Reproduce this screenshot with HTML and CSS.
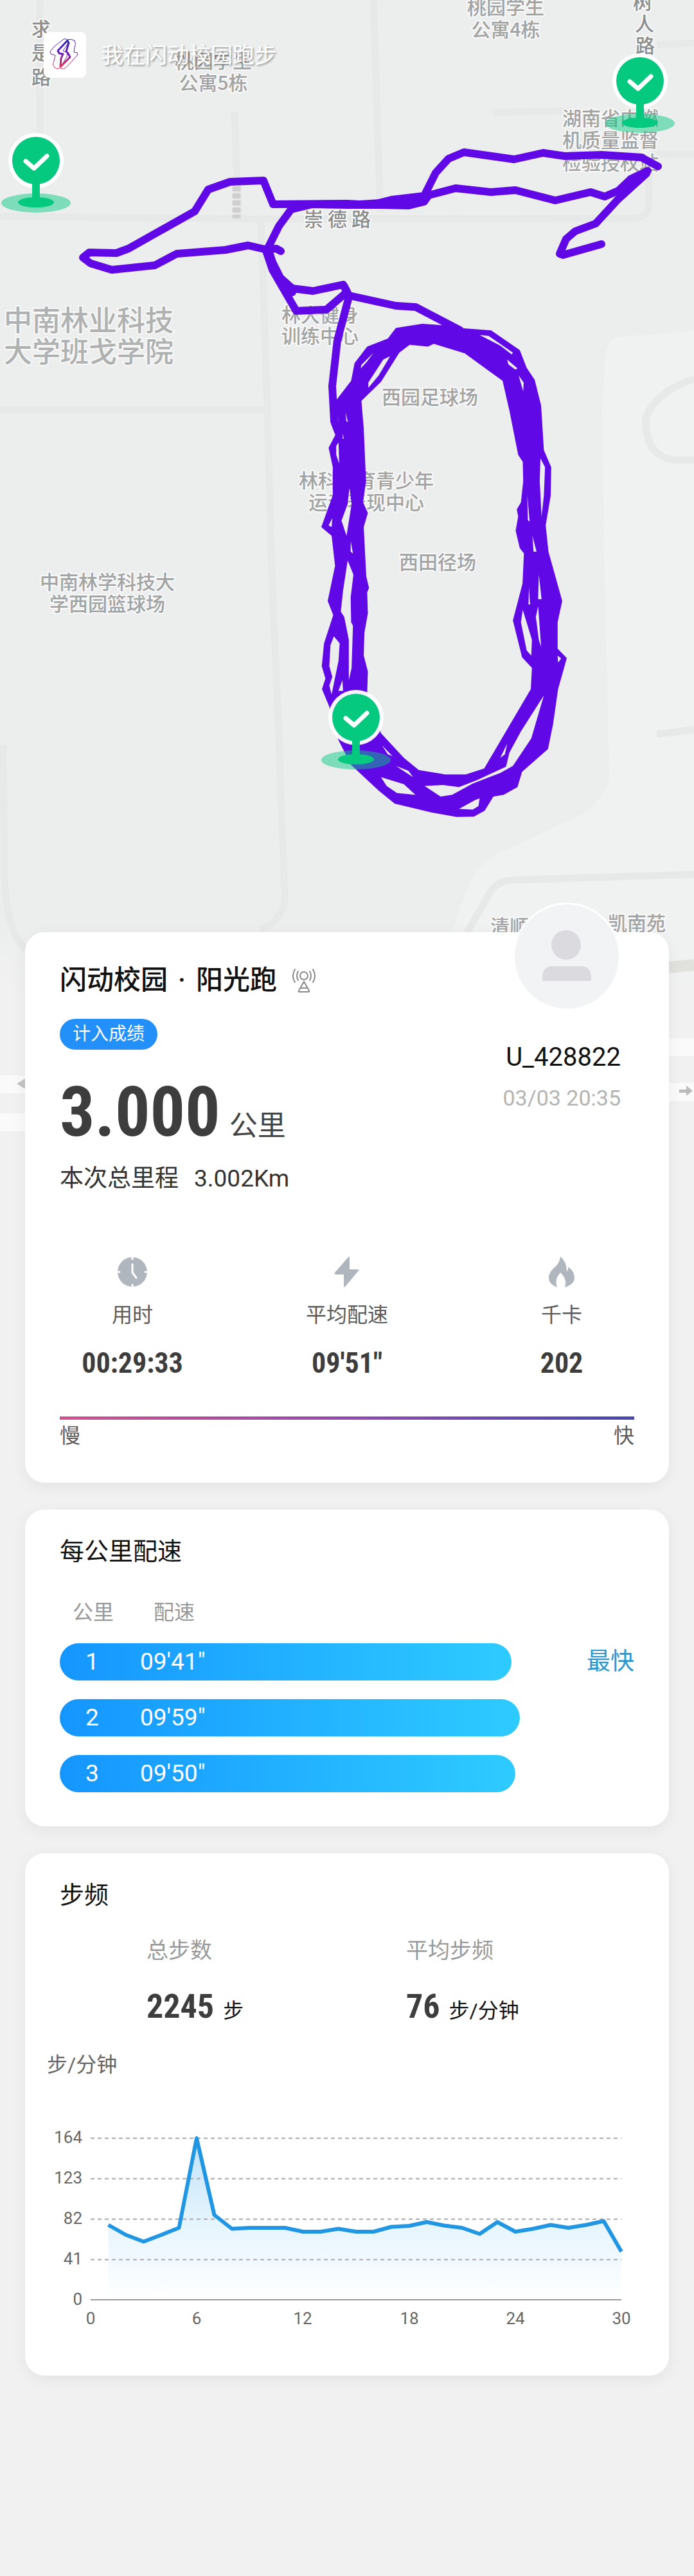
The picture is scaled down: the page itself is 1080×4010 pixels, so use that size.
FILE: index.html
```html
<!DOCTYPE html>
<html lang="zh-CN">
<head>
<meta charset="utf-8">
<meta name="viewport" content="width=device-width, initial-scale=1">
<title>我在闪动校园跑步</title>
<link rel="stylesheet" href="styles.css">
</head>
<body>
<div class="page">
  <svg class="map" viewBox="0 0 1080 2276" preserveAspectRatio="xMidYMin slice" aria-label="跑步轨迹">
    <defs>
      <g id="pin">
        <ellipse cx="0" cy="66" rx="54" ry="15" fill="#04c97f" fill-opacity=".48"/>
        <circle r="43" fill="#fff" fill-opacity=".95"/>
        <ellipse cx="0" cy="65" rx="28" ry="8" fill="#04c97f"/>
        <rect x="-6" y="30" width="12" height="36" fill="#04c97f"/>
        <circle r="37" fill="#04c97f"/>
        <path d="M-16 1L-3 12L17 -7" fill="none" stroke="#fff" stroke-width="7" stroke-linecap="round" stroke-linejoin="round"/>
      </g>
      <linearGradient id="fade" x1="0" y1="0" x2="0" y2="1">
        <stop offset="0" stop-color="#f1f1f1" stop-opacity="0"/>
        <stop offset="1" stop-color="#f1f1f1"/>
      </linearGradient>
    </defs>
    <rect width="1080" height="2276" fill="#eceeed"/>
    <!-- lighter blocks -->
    <path d="M1080 515L960 525Q944 530 942 560L936 640L948 1210Q940 1245 907 1267L767 1333Q735 1355 725 1390L700 1460V2276H1080Z" fill="#f0f1f1"/>
    <rect y="1440" width="1080" height="100" fill="url(#fade)"/>
    <rect y="1540" width="1080" height="736" fill="#f1f1f1"/>
    <!-- roads -->
    <g class="roads">
      <path d="M62 0V210M0 337L400 341L985 340Q1010 338 1010 318V250M1012 240H1080M365 175L371 340M406 344L415 600L422 863L433 1127L443 1390Q446 1430 405 1447M0 638H412M5 1160L7 1368Q10 1430 26 1460L40 1480M581 0L592 330M767 175L890 172M1022 70L1080 67"/>
      <path d="M1080 590Q1020 610 1005 650Q1003 710 1050 716H1080M1022 1143L1080 1136M1080 1361L797 1370Q772 1372 762 1390L722 1460"/>
    </g>
    <path d="M1030 1507L1080 1502" stroke="#e1e1de" stroke-width="18"/>
    <path d="M368 290V340" stroke="#cfcfcf" stroke-width="13" stroke-dasharray="8 3"/>
    <path d="M0 1688H60M0 1747H60M1020 1630H1080M1020 1700H1080" stroke="#fafafa" stroke-width="28"/>
    <path d="M26 1687L39 1679V1695Z" fill="#c4c4c4"/>
    <path d="M1057 1696H1068V1690L1078 1698L1068 1706V1701H1057Z" fill="#bbb"/>
    <!-- place names -->
    <g class="place">
      <text x="787" y="22">桃园学生</text><text x="787" y="57">公寓4栋</text>
      <text x="332" y="106">桃园学生</text><text x="332" y="140">公寓5栋</text>
      <text x="950" y="195">湖南省内燃</text><text x="950" y="229">机质量监督</text><text x="950" y="264">检验授权站</text>
      <text x="498" y="501">林大健身</text><text x="498" y="534">训练中心</text>
      <text x="669" y="629">西园足球场</text>
      <text x="570" y="759">林科体育青少年</text><text x="570" y="793">运动表现中心</text>
      <text x="681" y="886">西田径场</text>
      <text x="167" y="917">中南林学科技大</text><text x="167" y="951">学西园篮球场</text>
      <text x="793" y="1453">清顺</text><text x="991" y="1448">凯南苑</text>
    </g>
    <g class="place road-name">
      <text x="64" y="56">求</text><text x="64" y="93">是</text><text x="64" y="131">路</text>
      <text x="1000" y="14">树</text><text x="1003" y="48">人</text><text x="1004" y="82">路</text>
      <text x="488" y="352">崇</text><text x="525" y="352">德</text><text x="562" y="352">路</text>
    </g>
    <g class="place campus">
      <text x="138" y="515">中南林业科技</text><text x="138" y="564">大学班戈学院</text>
    </g>
    <!-- track -->
    <g class="track">
      <path d="M437 391L430 387L412 388L386 382L351 389L275 395L241 413L174 420L141 410L129 401L139 393L181 394L200 387L303 329L324 295L358 283L410 281L425 318L540 317L578 319L609 311L660 305L678 269L698 247L722 237L800 248L845 238L879 243L936 241L998 245L1024 259"/>
      <path d="M1008 266L981 279L962 297L941 306L919 299L864 312L802 296L764 299L709 293L667 304L660 314L636 320L592 319L540 319L486 318L453 326L434 352L417 386L430 427L455 449L487 453L534 443L542 459"/>
      <path d="M414 390L424 420L461 484L508 482L537 457M420 400L440 440L455 455"/>
      <path d="M1006 270L962 310L927 348L895 360L881 372L871 395L876 397L936 380"/>
      <path d="M536 446L543 460L616 476L647 478L716 514M543 462L525 530L517 601L520 656L526 672"/>
      <path d="M560 318L609 315L655 310L662 306"/>
    </g>
    <path transform="translate(400 420) scale(.3571 .5485)" fill="#6008e6" fill-rule="evenodd" d="M345 370L410 315L425 265L480 218L570 195L605 165L720 153L830 158L880 165L1020 172L1145 228L1175 278L1210 312L1238 385L1250 512L1282 560L1280 640L1258 725L1270 800L1330 940L1310 1000V1075L1350 1102L1312 1190L1290 1290L1268 1360L1155 1425L1135 1468L1075 1490L1030 1495L992 1535L945 1552L870 1553L760 1540L600 1515L530 1478L410 1405L355 1335L315 1240L283 1190L298 1160L282 1125L292 1060L332 980L308 940L340 840L325 755L280 730L330 640V560L312 505L340 470L348 440Z
      M455 372L540 318L620 235L665 213L745 218L770 210L905 237L1070 315L1100 400L1138 525L1158 545L1160 600L1150 660L1132 680L1138 700L1127 740L1145 790L1163 805L1157 890L1115 995L1155 1100L1198 1130L1193 1190L990 1415L910 1432H820L705 1420L640 1385L540 1315L480 1200L483 1140L465 1095L468 1030L483 975L480 915L488 903L476 870L465 730L483 690L462 660L475 600L465 450Z
      M345 500L355 490L358 550L345 525ZM403 618L412 665L390 755L368 712L395 665ZM328 705L325 730L312 725ZM395 825L420 865L408 930L410 1000L418 1010L412 1130L400 1165V1050L380 985L365 970L375 910ZM335 1040L360 1060L355 1110L325 1205L315 1180L328 1155L315 1125L320 1065ZM372 1165L375 1195H355ZM408 770L418 805L408 800Z
      M347 400L355 435L348 430ZM386 405L396 432L389 430ZM374 465L378 480L373 478Z
      M455 270L508 235L480 260L452 280ZM485 320L550 255L580 245L530 300L485 335ZM970 185L1010 188L1115 235L1110 240L1060 215ZM1090 255L1135 280L1125 283L1095 268ZM1140 300L1162 320L1160 345Z
      M1235 535L1255 560L1250 640L1240 700L1232 600ZM1178 640L1188 715L1180 710ZM1200 755L1218 800L1205 800ZM1228 865L1240 935H1225ZM1185 900L1190 950H1183ZM1158 965L1198 1050L1195 1095L1175 1080L1150 1000ZM1225 955L1238 1070L1228 1050L1215 985ZM1310 1095L1325 1103L1312 1115Z
      M1250 1208L1195 1330L1115 1408L1060 1428L940 1458L850 1490L800 1495L730 1465L810 1462L880 1468L960 1448L1085 1410L1100 1370L1150 1310ZM1090 1345L1080 1375L1060 1385ZM545 1350L590 1380L570 1375ZM605 1408L660 1422L680 1440ZM540 1440L640 1460L690 1490L610 1485L565 1465ZM880 1530L950 1505L970 1500L965 1522L940 1532Z"/>
    <use href="#pin" x="56" y="250"/>
    <use href="#pin" x="996" y="126"/>
    <use href="#pin" x="554" y="1117"/>
  </svg>

  <header class="top">
    <svg class="logo" viewBox="0 0 66 71" aria-hidden="true">
      <defs>
        <linearGradient id="lg" x1="0" y1="0" x2="0" y2="1">
          <stop offset="0" stop-color="#3a2bb0"/><stop offset=".5" stop-color="#6a1fb5"/><stop offset="1" stop-color="#e8305a"/>
        </linearGradient>
      </defs>
      <rect width="66" height="71" rx="8" fill="#fff"/>
      <g fill="none" stroke="url(#lg)" stroke-linejoin="round">
        <path stroke-width="1" d="M31 11Q35 9 38 13L37 19L30 29L37 32L36 38L27 54Q22 59 17 55Q13 50 16 45L18 36L11 34L10 30L17 22Z"/>
        <path stroke-width="1" d="M36 12Q42 10 48 13Q51 18 48 24L47 31L52 32L53 35L36 54Q30 59 26 56"/>
        <path stroke-width="3" d="M37 13L22 29L24 33L30 34L27 41L26 54L41 39L38 33L35 30L39 17Z"/>
      </g>
    </svg>
    <h1 class="top-title">我在闪动校园跑步</h1>
  </header>

  <main>
    <section class="card summary">
      <div class="summary-head">
        <div>
          <div class="run-type">
            <h2>闪动校园<span class="dot">·</span>阳光跑</h2>
            <svg class="antenna" viewBox="0 0 36 37" aria-hidden="true">
              <g fill="none" stroke="#8a8a8a" stroke-width="2" stroke-linecap="round" stroke-linejoin="round">
                <circle cx="18" cy="11" r="6"/>
                <path d="M9 4Q5 11 9 18M4 1Q-2 11 4 21M27 4Q31 11 27 18M32 1Q38 11 32 21M18 20L10 34Q9 36 11 36H25Q27 36 26 34ZM13 30H23"/>
              </g>
            </svg>
          </div>
          <p class="badge">计入成绩</p>
          <p class="distance"><strong>3.000</strong><span>公里</span></p>
          <p class="total">本次总里程<span>3.002Km</span></p>
        </div>
        <div class="runner">
          <svg class="avatar" viewBox="0 0 168 168" aria-hidden="true">
            <circle cx="84" cy="84" r="84" fill="#fff"/>
            <circle cx="84" cy="84" r="81" fill="#f2f3f5"/>
            <circle cx="83" cy="66" r="23" fill="#dbdbdf"/>
            <path d="M46 122V117Q46 99 62 99H106Q122 99 122 117V122Z" fill="#dbdbdf"/>
          </svg>
          <span class="name">U_428822</span>
          <time class="date">03/03 20:35</time>
        </div>
      </div>
      <dl class="stats">
        <div>
          <dt><svg class="stat-icon" viewBox="0 0 48 48" aria-hidden="true"><circle cx="24" cy="24" r="23"/><path d="M24 0V4M24 44V48M0 24H4M44 24H48M24 12V25L30 33" fill="none" stroke="#fff" stroke-width="3" stroke-linecap="round" stroke-linejoin="round"/></svg>用时</dt>
          <dd>00:29:33</dd>
        </div>
        <div>
          <dt><svg class="stat-icon" viewBox="0 0 48 48" aria-hidden="true"><path d="M26 1Q28 -1 28 2V20H41Q43 20 42 22L21 47Q19 49 19 46V28H6Q4 28 5 25Z"/></svg>平均配速</dt>
          <dd>09'51"</dd>
        </div>
        <div>
          <dt><svg class="stat-icon" viewBox="0 0 48 48" aria-hidden="true"><path d="M22 0Q32 8 32 23Q35 21 34 16Q44 23 44 33Q44 43 29 48Q33 35 22 25Q12 36 17 48Q4 43 4 33Q4 24 14 16Q21 10 22 0Z"/></svg>千卡</dt>
          <dd>202</dd>
        </div>
      </dl>
      <div class="scale"><span>慢</span><span>快</span></div>
    </section>

    <section class="card pace">
      <h2>每公里配速</h2>
      <table>
        <thead><tr><th>公里</th><th>配速</th></tr></thead>
        <tbody>
          <tr style="--w:78.6%"><th scope="row">1</th><td>09'41"</td><td class="best">最快</td></tr>
          <tr style="--w:80.1%"><th scope="row">2</th><td>09'59"</td></tr>
          <tr style="--w:79.3%"><th scope="row">3</th><td>09'50"</td></tr>
        </tbody>
      </table>
    </section>

    <section class="card cadence">
      <h2>步频</h2>
      <dl class="steps">
        <div><dt>总步数</dt><dd><strong>2245</strong><span>步</span></dd></div>
        <div><dt>平均步频</dt><dd><strong>76</strong><span>步/分钟</span></dd></div>
      </dl>
      <p class="axis-unit">步/分钟</p>
      <svg class="chart" viewBox="0 0 1002 330" role="img" aria-label="步频曲线">
        <defs>
          <linearGradient id="area" x1="0" y1="0" x2="0" y2="1">
            <stop offset="0" stop-color="#bfe2fa"/><stop offset=".5" stop-color="#e4f4fd"/><stop offset="1" stop-color="#fff"/>
          </linearGradient>
        </defs>
        <path fill="url(#area)" d="M129.5 185.5L157 201L184.5 211.5L212 201L239.5 190L267 50.5L294.5 170L322 191.5L349.5 190H404.5L432.5 196H460L487.5 191.5L515 196H542.5L570 188.5L597.5 187L625 181L652.5 186.5L680 190L707.5 199.5L735 181L763 196L790.5 191.5L818 185.5L845.5 190L873 185.5L900.5 179.5L928 227V302H129.5Z"/>
        <path class="grid" d="M102 50.5H928M102 113.5H928M102 176.5H928M102 239.5H928"/>
        <path d="M102 302H928" stroke="#999ba0" stroke-width="2"/>
        <path class="line" d="M129.5 185.5L157 201L184.5 211.5L212 201L239.5 190L267 50.5L294.5 170L322 191.5L349.5 190H404.5L432.5 196H460L487.5 191.5L515 196H542.5L570 188.5L597.5 187L625 181L652.5 186.5L680 190L707.5 199.5L735 181L763 196L790.5 191.5L818 185.5L845.5 190L873 185.5L900.5 179.5L928 227"/>
        <g class="tick y">
          <text x="89" y="58">164</text><text x="89" y="121">123</text><text x="89" y="184">82</text><text x="89" y="247">41</text><text x="89" y="310">0</text>
        </g>
        <g class="tick x">
          <text x="102" y="340">0</text><text x="267" y="340">6</text><text x="432" y="340">12</text><text x="598" y="340">18</text><text x="763" y="340">24</text><text x="928" y="340">30</text>
        </g>
      </svg>
    </section>
  </main>
</div>
</body>
</html>
```
FILE: styles.css
```css
* { box-sizing: border-box; }

body {
  margin: 0;
  background: #f1f1f1;
  color: #111;
  font-family: Roboto, "Noto Sans CJK SC", sans-serif;
}

h1, h2, p, dl, dd { margin: 0; font-weight: 400; }

.page { position: relative; padding-bottom: 310px; }

/* backdrop behind the header and the summary card */
.map {
  position: absolute;
  top: 0;
  left: 0;
  width: 100%;
  height: 2276px;
}
.roads path { fill: none; stroke: #e6e9e8; stroke-width: 11; }
.place {
  font: 500 30px "Noto Sans CJK SC", sans-serif;
  fill: #a2a4a4;
  stroke: #f8f8f8;
  stroke-width: 4px;
  paint-order: stroke;
  text-anchor: middle;
}
.road-name { fill: #8c8e8e; }
.campus { font-size: 44px; fill: #b0b2b2; }
.track path {
  fill: none;
  stroke: #6008e6;
  stroke-width: 12;
  stroke-linecap: round;
  stroke-linejoin: round;
}

.top {
  position: relative;
  display: flex;
  align-items: center;
  gap: 24px;
  padding: 50px 68px 0;
}
.logo { width: 66px; height: 71px; }
.top-title {
  color: #fff;
  font-size: 34px;
  line-height: 50px;
  text-shadow: 2px 2px 3px rgba(0, 0, 0, .35);
}

main {
  position: relative;
  display: flex;
  flex-direction: column;
  gap: 42px;
  padding: 1330px 39px 0;
}

.card {
  padding: 35px 54px 53px;
  border-radius: 30px;
  background: #fff;
  box-shadow: 0 6px 24px rgba(0, 0, 0, .06);
}
.card > h2 { font-size: 38px; line-height: 60px; }

.summary { padding-top: 45px; }
.summary-head { display: flex; justify-content: space-between; }
.run-type { display: flex; align-items: center; gap: 24px; }
.run-type h2 { font-size: 42px; font-weight: 500; line-height: 60px; }
.dot { margin: 0 16px; }
.antenna { width: 36px; height: 37px; }
.badge {
  width: fit-content;
  margin-top: 30px;
  padding: 0 20px;
  border-radius: 24px;
  background: #2290f8;
  color: #fff;
  font-size: 28px;
  line-height: 48px;
}
.distance strong, .stats dd, .steps strong {
  font-family: "Noto Sans ExtraCondensed", "Roboto Condensed", Roboto, sans-serif;
  font-weight: 700;
  color: #3e3d3e;
}
.distance {
  display: flex;
  align-items: baseline;
  gap: 14px;
  margin-top: 22px;
  color: #444;
}
.distance strong { font-size: 108px; line-height: 150px; }
.distance span { font-size: 44px; line-height: 60px; }
.total {
  display: flex;
  gap: 24px;
  margin-top: 4px;
  color: #333;
  font-size: 37px;
  line-height: 50px;
}

.runner {
  display: flex;
  flex-direction: column;
  align-items: flex-end;
  padding-right: 21px;
}
.avatar { width: 168px; height: 168px; margin-top: -91px; }
.name { margin-top: 48px; font-size: 40px; line-height: 50px; }
.date { margin-top: 18px; color: #b4b4b4; font-size: 34px; line-height: 40px; }

.stats {
  display: grid;
  grid-template-columns: repeat(3, 1fr);
  margin: 96px -54px 0;
  text-align: center;
}
.stats dt {
  display: flex;
  flex-direction: column;
  align-items: center;
  gap: 23px;
  color: #5c5c5c;
  font-size: 32px;
  line-height: 40px;
}
.stat-icon { width: 48px; height: 48px; fill: #b0b6be; }
.stats dd { margin-top: 25px; font-size: 44px; line-height: 60px; }

.scale {
  display: flex;
  justify-content: space-between;
  margin-top: 53px;
  padding-top: 10px;
  background: linear-gradient(90deg, #d1508e, #9449b0 50%, #4647b4) top / 100% 5px no-repeat;
  color: #5c5c5c;
  font-size: 32px;
  line-height: 40px;
}

.pace table { display: block; margin-top: 45px; }
.pace thead, .pace tbody { display: block; }
.pace tr { display: flex; position: relative; }
.pace th, .pace td { padding: 0; font-weight: 400; text-align: left; }
.pace thead tr { gap: 62px; padding-left: 20px; color: #999; font-size: 32px; line-height: 40px; }
.pace tbody { display: flex; flex-direction: column; gap: 29px; margin-top: 28px; }
.pace tbody tr { isolation: isolate; color: #fff; font-size: 37px; line-height: 58px; }
.pace tbody tr::before {
  content: "";
  position: absolute;
  inset: 0 auto 0 0;
  z-index: -1;
  width: var(--w);
  border-radius: 29px;
  background: linear-gradient(90deg, #1596ff, #2ecbff);
}
.pace tbody th { width: 125px; padding-left: 40px; }
.pace .best { margin-left: auto; color: #2b97d0; }

.cadence { padding-bottom: 90px; }
.steps { display: flex; margin-top: 34px; padding-left: 135px; }
.steps div { flex: none; width: 404px; }
.steps div:last-child { flex: 1; }
.steps dt { color: #999; font-size: 34px; line-height: 44px; }
.steps dd { display: flex; align-items: baseline; gap: 14px; margin-top: 26px; }
.steps strong { font-size: 52px; line-height: 80px; }
.steps span { font-size: 32px; line-height: 40px; }
.axis-unit { margin: 30px -20px 0; color: #666; font-size: 32px; line-height: 40px; }
.chart { display: block; margin: 44px -54px 0; overflow: visible; }
.grid { stroke: #a9a9ac; stroke-width: 2; stroke-dasharray: 6 5; }
.line { fill: none; stroke: #2196e3; stroke-width: 6; stroke-linejoin: round; }
.tick { fill: #666; font-size: 26px; }
.tick.y { text-anchor: end; }
.tick.x { text-anchor: middle; }
```
